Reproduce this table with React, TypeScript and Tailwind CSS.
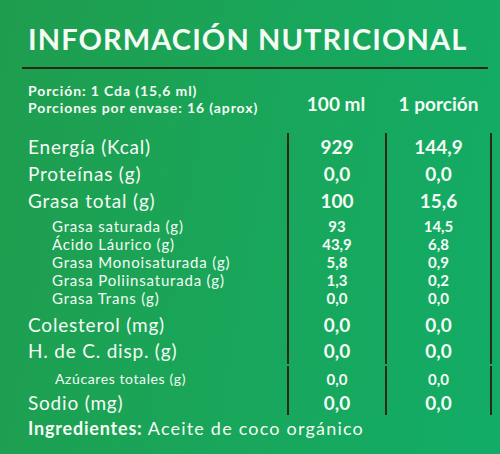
type Row = {
	label: string;
	a: string;
	b: string;
	kind: 'main' | 'sub' | 'small';
	h: string;
};

const rows: (Row | { spacer: string })[] = [
	{ label: 'Energía (Kcal)', a: '929', b: '144,9', kind: 'main', h: 'h-[27px] leading-[27px]' },
	{ label: 'Proteínas (g)', a: '0,0', b: '0,0', kind: 'main', h: 'h-[27px] leading-[27px]' },
	{ label: 'Grasa total (g)', a: '100', b: '15,6', kind: 'main', h: 'h-[27px] leading-[27px]' },
	{ spacer: 'h-[3px]' },
	{ label: 'Grasa saturada (g)', a: '93', b: '14,5', kind: 'sub', h: 'h-[18px] leading-[18px]' },
	{ label: 'Ácido Láurico (g)', a: '43,9', b: '6,8', kind: 'sub', h: 'h-[18px] leading-[18px]' },
	{ label: 'Grasa Monoisaturada (g)', a: '5,8', b: '0,9', kind: 'sub', h: 'h-[18px] leading-[18px]' },
	{ label: 'Grasa Poliinsaturada (g)', a: '1,3', b: '0,2', kind: 'sub', h: 'h-[18px] leading-[18px]' },
	{ label: 'Grasa Trans (g)', a: '0,0', b: '0,0', kind: 'sub', h: 'h-[18px] leading-[18px]' },
	{ spacer: 'h-[5px]' },
	{ label: 'Colesterol (mg)', a: '0,0', b: '0,0', kind: 'main', h: 'h-[26px] leading-[26px]' },
	{ label: 'H. de C. disp. (g)', a: '0,0', b: '0,0', kind: 'main', h: 'h-[26px] leading-[26px]' },
	{ label: 'Azúcares totales (g)', a: '0,0', b: '0,0', kind: 'small', h: 'h-[28px] pt-[2px] leading-[26px]' },
	{ label: 'Sodio (mg)', a: '0,0', b: '0,0', kind: 'main', h: 'h-[22px] leading-[22px]' },
	{ spacer: 'h-[1px]' },
];

const labelCls = {
	main: 'pl-[28px] text-[19px] tracking-[0.8px]',
	sub: 'pl-[52px] text-[15px] tracking-[0.8px]',
	small: 'pl-[55px] text-[14px] tracking-[0.6px]',
};

const valueCls = {
	main: 'text-[19px] font-bold',
	sub: 'text-[15px] font-bold',
	small: 'text-[15px] font-bold',
};

const App = () => {
	return (
		<div className="w-[500px] h-[454px] overflow-hidden bg-[linear-gradient(100deg,#1f9d4e_0%,#19a65a_50%,#12ac67_100%)] font-['Lato',sans-serif] text-[#f4fbf4]">
			<h1 className="pt-[21px] pl-[28px] h-[57px] text-[29px] leading-[36px] font-bold tracking-[1.1px] whitespace-nowrap">
				INFORMACIÓN NUTRICIONAL
			</h1>
			<div className="mt-[10px] ml-[22px] w-[466px] h-[2px] bg-[#2b2816]" />

			<div className="mt-[13px] flex">
				<div className="w-[287px] pl-[28px] text-[14px] leading-[17px] font-bold tracking-[0.9px] whitespace-nowrap">
					<div>Porción: 1 Cda (15,6 ml)</div>
					<div>Porciones por envase: 16 (aprox)</div>
				</div>
				<div className="w-[98px] pt-[11px] text-center text-[19px] leading-[22px] font-bold">100 ml</div>
				<div className="w-[107px] pt-[11px] text-center text-[19px] leading-[22px] font-bold whitespace-nowrap">1 porción</div>
			</div>

			<div className="mt-[17px]">
				{rows.map((row, index) =>
					'spacer' in row ? (
						<div className={`flex ${row.spacer}`} key={index}>
							<div className="w-[287px]" />
							<div className="w-[98px] border-l-2 border-[#2b2816]" />
							<div className="w-[107px] border-x-2 border-[#2b2816]" />
						</div>
					) : (
						<div className={`flex ${row.h}`} key={index}>
							<div className={`w-[287px] whitespace-nowrap ${labelCls[row.kind]}`}>{row.label}</div>
							<div className={`w-[98px] border-l-2 border-[#2b2816] text-center ${valueCls[row.kind]}`}>{row.a}</div>
							<div className={`w-[107px] border-x-2 border-[#2b2816] text-center ${valueCls[row.kind]}`}>{row.b}</div>
						</div>
					),
				)}
			</div>

			<div className="mt-[3px] pl-[28px] text-[18px] leading-[20px] tracking-[1.2px] whitespace-nowrap">
				<span className="font-bold tracking-[0.8px]">Ingredientes:</span> Aceite de coco orgánico
			</div>
		</div>
	);
};

export default App;
